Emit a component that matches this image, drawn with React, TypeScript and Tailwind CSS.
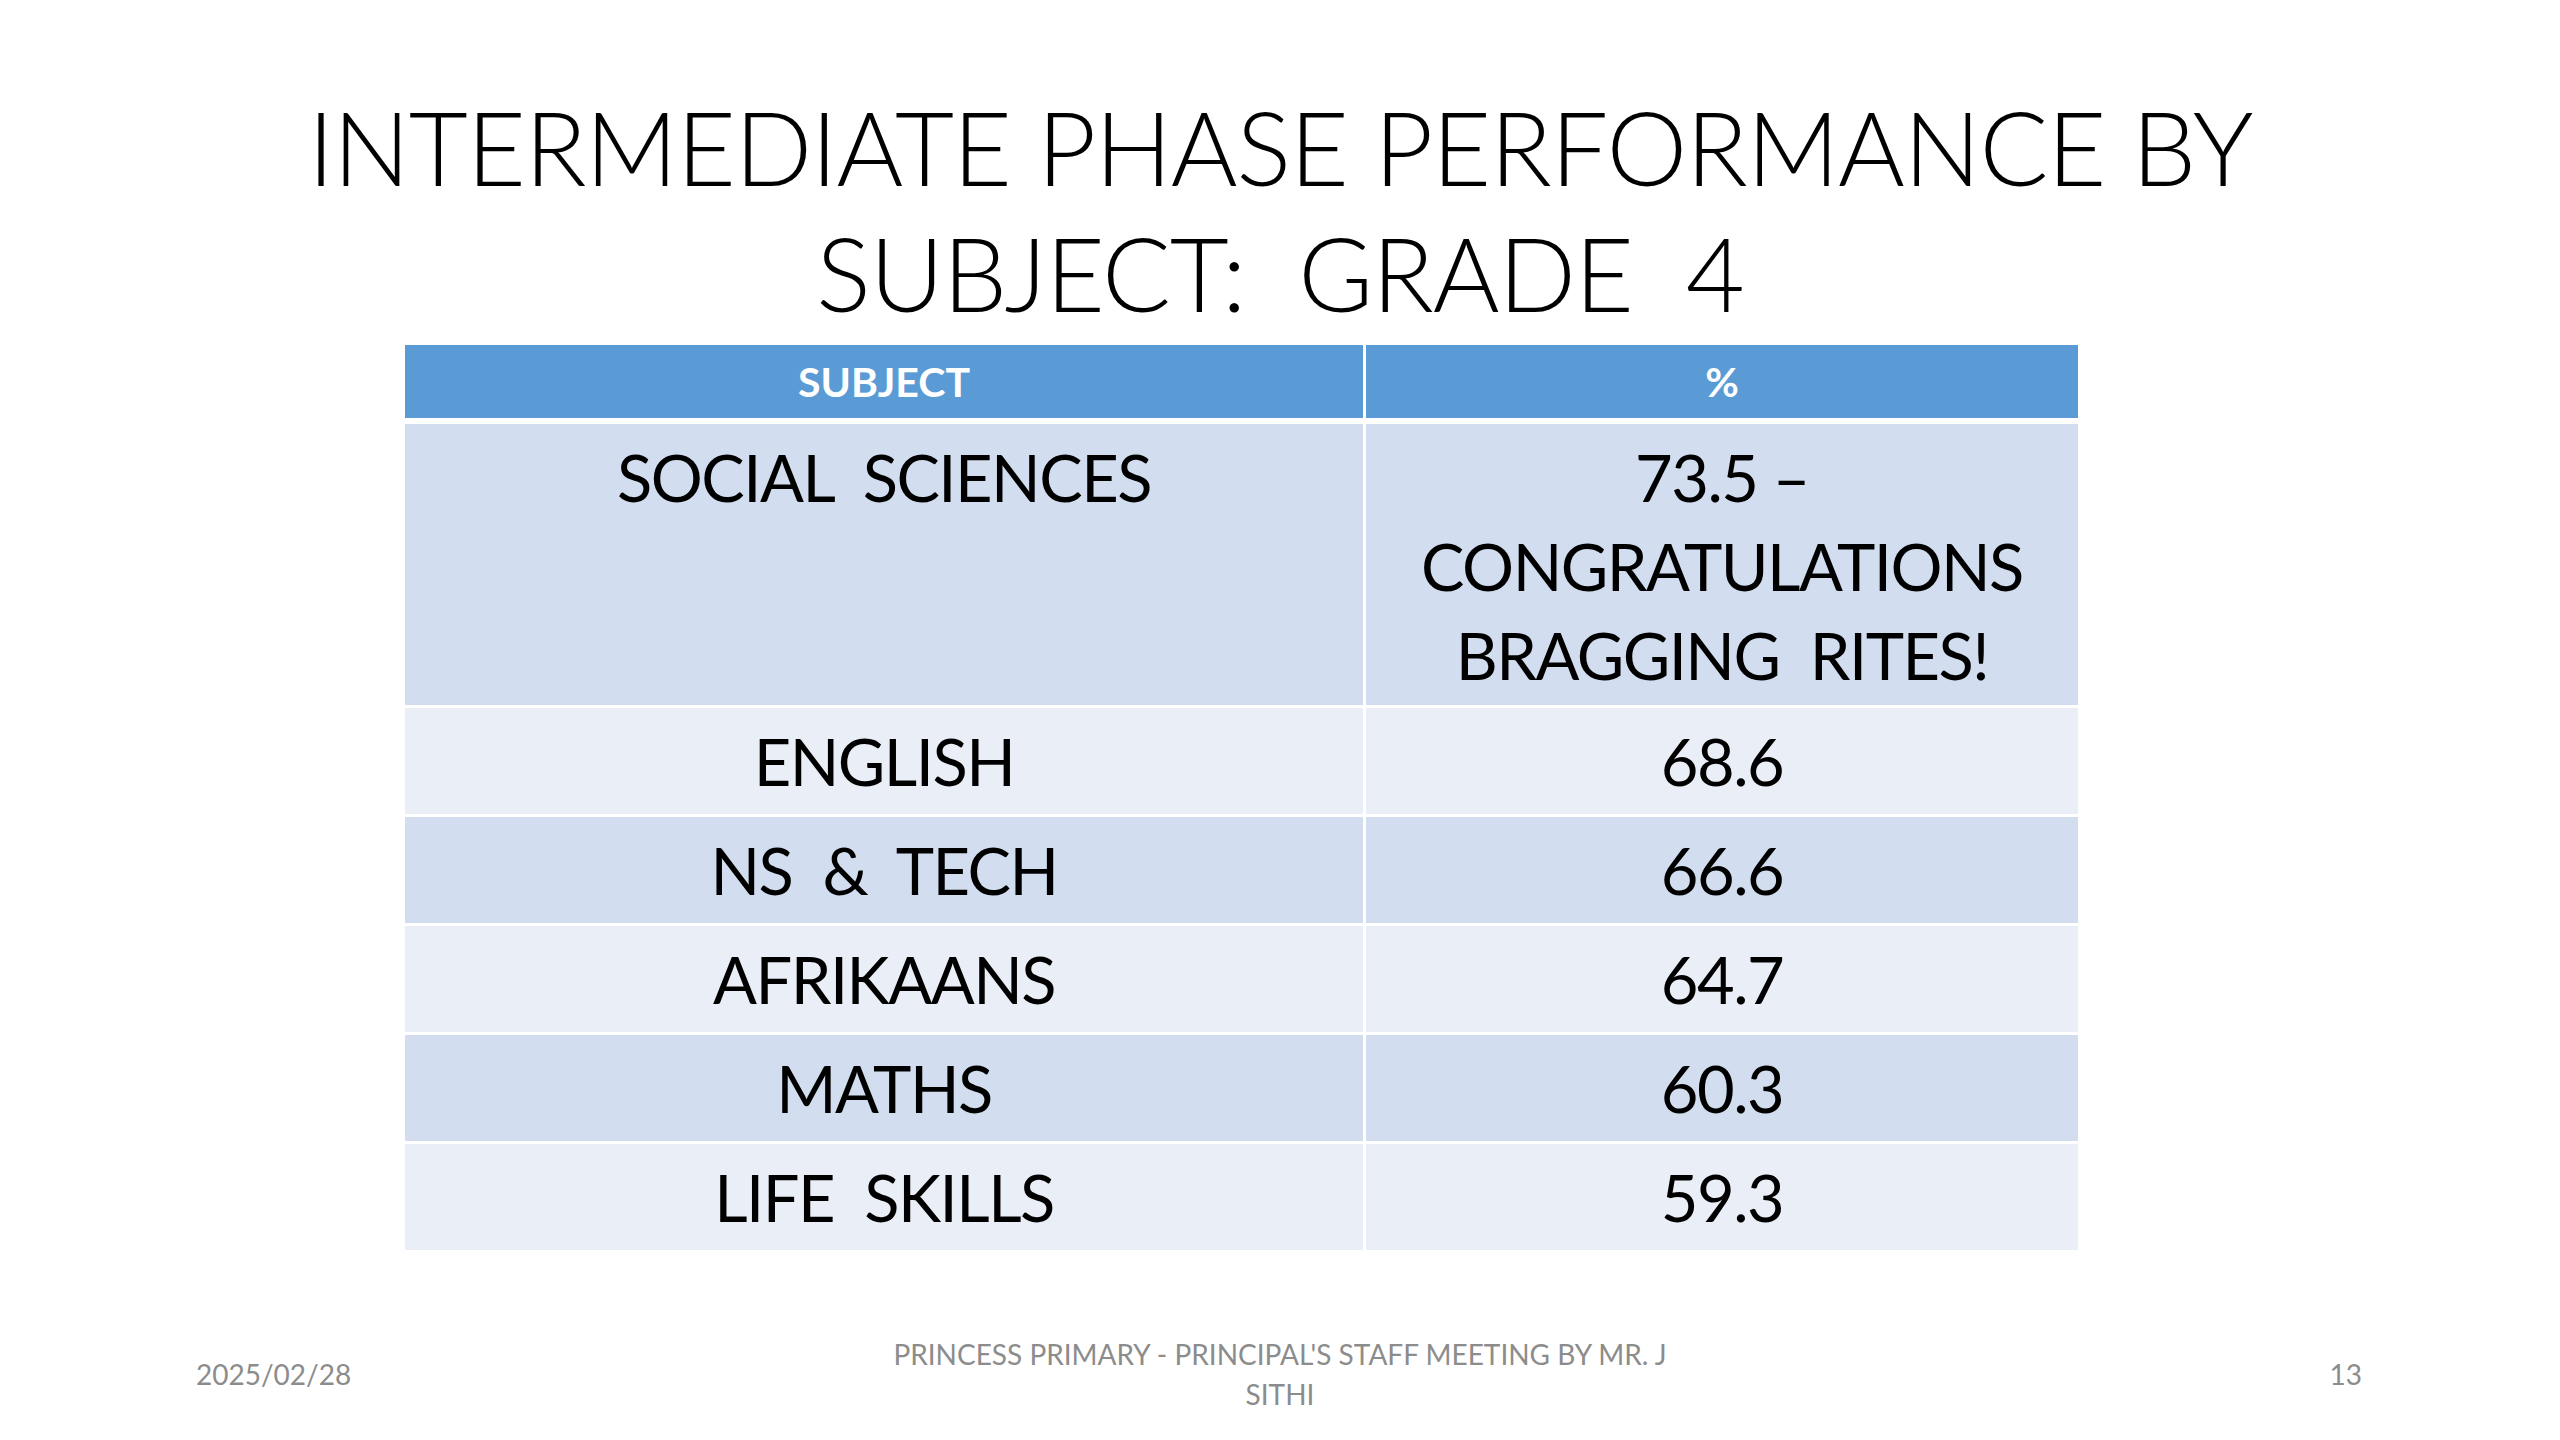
const rows = [
  { subject: "SOCIAL  SCIENCES", value: ["73.5 –", "CONGRATULATIONS", "BRAGGING  RITES!"] },
  { subject: "ENGLISH", value: ["68.6"] },
  { subject: "NS  &  TECH", value: ["66.6"] },
  { subject: "AFRIKAANS", value: ["64.7"] },
  { subject: "MATHS", value: ["60.3"] },
  { subject: "LIFE  SKILLS", value: ["59.3"] },
];

export default function App() {
  return (
    <div className="w-[2560px] h-[1440px] bg-white flex flex-col text-black font-['Lato','Open_Sans',sans-serif]">
      <h1 className="mt-[84px] text-center text-[102px] leading-[126px] font-light tracking-[-1.2px] whitespace-pre">
        {"INTERMEDIATE PHASE PERFORMANCE BY\nSUBJECT:  GRADE  4"}
      </h1>

      <div className="mt-[9px] ml-[405px] w-[1673px] flex flex-col gap-[3px] bg-white">
        <div className="grid grid-cols-[958px_1fr] gap-[3px] mb-[3px]">
          <div className="h-[73px] bg-[#5b9bd5] flex items-center justify-center text-white font-bold text-[41px]">SUBJECT</div>
          <div className="h-[73px] bg-[#5b9bd5] flex items-center justify-center text-white font-bold text-[41px]">%</div>
        </div>
        {rows.map((r, i) => {
          const cell = `${i % 2 === 0 ? "bg-[#d2deef]" : "bg-[#eaeff7]"} ${i === 0 ? "pb-[5px]" : "pb-[8px]"} text-center text-[65px] leading-[89px] tracking-[-1.5px] pt-[9px] whitespace-pre`;
          return (
            <div key={i} className="grid grid-cols-[958px_1fr] gap-[3px]">
              <div className={cell}>{r.subject}</div>
              <div className={cell}>
                {r.value.map((v, j) => (
                  <div key={j}>{v}</div>
                ))}
              </div>
            </div>
          );
        })}
      </div>

      <div className="mt-auto mb-[26px] w-full px-[196px] flex items-center justify-between text-[#8c8c8c] text-[28px] leading-[40px]">
        <div className="w-[400px]">2025/02/28</div>
        <div className="text-center">
          <div>PRINCESS PRIMARY - PRINCIPAL'S STAFF MEETING BY MR. J</div>
          <div>SITHI</div>
        </div>
        <div className="w-[400px] text-right pr-[2px]">13</div>
      </div>
    </div>
  );
}
